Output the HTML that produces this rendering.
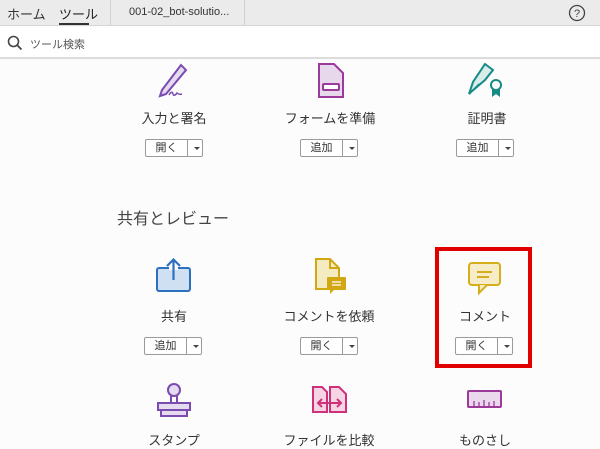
<!DOCTYPE html>
<html><head><meta charset="utf-8"><style>
*{margin:0;padding:0;box-sizing:border-box}
body{width:600px;height:440px;overflow:hidden;background:#fcfcfc;font-family:"Liberation Sans","Noto Sans CJK JP",sans-serif;color:#333;position:relative}
.a{position:absolute}
.top{left:0;top:0;width:600px;height:26px;background:#ebebeb;border-bottom:1px solid #d6d6d6}
.sep{top:0;width:1px;height:26px;background:#d0d0d0}
.search{left:0;top:27px;width:600px;height:32px;background:#fff;border-bottom:2px solid #dcdcdc}
.lbl{width:160px;text-align:center;font-size:13px;color:#333;line-height:16px}
.btn{width:58px;height:18px;border:1px solid #9a9a9a;border-radius:2px;background:#fff;font-size:11px;line-height:16px}
.btn span{position:absolute;left:0;top:0;width:41px;text-align:center}
.btn i{position:absolute;left:41px;top:0;width:1px;height:16px;background:#9a9a9a}
.btn b{position:absolute;left:48px;top:7px;border-left:3px solid transparent;border-right:3px solid transparent;border-top:3px solid #444}
</style></head><body>
<div class="a top"></div>
<div class="a" style="left:7px;top:4px;font-size:13px;color:#333">ホーム</div>
<div class="a" style="left:59px;top:4px;font-size:13px;color:#222">ツール</div>
<div class="a" style="left:59px;top:23px;width:30px;height:2px;background:#333"></div>
<div class="a sep" style="left:110px"></div>
<div class="a sep" style="left:244px"></div>
<div class="a" style="left:129px;top:6px;font-size:11px;color:#333">001-02_bot-solutio...</div>
<svg class="a" style="left:568px;top:4px" width="18" height="18"><circle cx="9" cy="9" r="7.5" fill="none" stroke="#444" stroke-width="1.3"/><text x="9" y="13" font-size="11" text-anchor="middle" fill="#444" font-family="Liberation Sans">?</text></svg>
<div class="a search"></div>
<svg class="a" style="left:7px;top:35px" width="16" height="16"><circle cx="6.5" cy="6.5" r="5" fill="none" stroke="#444" stroke-width="1.6"/><line x1="10" y1="10" x2="14.5" y2="14.5" stroke="#444" stroke-width="1.8"/></svg>
<div class="a" style="left:30px;top:36px;font-size:11px;color:#555">ツール検索</div>

<svg class="a" style="left:156px;top:62px" width="40" height="36"><path d="M6 28 L4 34 L10 32 L30 8 L25 3 Z" fill="#e4dbf0" stroke="#7b4bb0" stroke-width="2"/><path d="M10 32 L4 34 M13 33 q3 -5 4 -1 q1 3 4 -1 q2 2 5 1" fill="none" stroke="#7b4bb0" stroke-width="1.5"/></svg>
<svg class="a" style="left:316px;top:62px" width="30" height="38"><path d="M3 2 H18 L27 11 V35 H3 Z" fill="#e8d8ec" stroke="#9b3a9a" stroke-width="2"/><rect x="7" y="22" width="16" height="6" rx="1" fill="#fff" stroke="#9b3a9a" stroke-width="2"/></svg>
<svg class="a" style="left:467px;top:62px" width="40" height="38"><path d="M18 2 L26 8 L18 18 L4 30 L2 32 L6 20 Z" fill="#d8ecea" stroke="#168a86" stroke-width="2"/><path d="M4 30 L12 22" stroke="#168a86" stroke-width="1.5"/><circle cx="29" cy="23" r="5" fill="none" stroke="#168a86" stroke-width="2"/><path d="M25 27 V35 L29 32 L33 35 V27" fill="#168a86"/></svg>
<div class="a lbl" style="left:94px;top:111px">入力と署名</div>
<div class="a lbl" style="left:250px;top:111px">フォームを準備</div>
<div class="a lbl" style="left:407px;top:111px">証明書</div>
<div class="a btn" style="left:145px;top:139px"><span>開く</span><i></i><b></b></div>
<div class="a btn" style="left:300px;top:139px"><span>追加</span><i></i><b></b></div>
<div class="a btn" style="left:456px;top:139px"><span>追加</span><i></i><b></b></div>

<div class="a" style="left:117px;top:205px;font-size:16px;color:#444">共有とレビュー</div>

<svg class="a" style="left:155px;top:256px" width="38" height="38"><rect x="2" y="12" width="33" height="23" rx="2" fill="#cfe0f3" stroke="#2d6fc0" stroke-width="2"/><rect x="14" y="10" width="9" height="4" fill="#fcfcfc"/><path d="M18.5 24 V4 M12 10 L18.5 3.5 L25 10" fill="none" stroke="#2d6fc0" stroke-width="2.2"/></svg>
<svg class="a" style="left:313px;top:257px" width="36" height="38"><path d="M3 2 H17 L26 11 V32 H3 Z" fill="#f5ebc3" stroke="#d2a812" stroke-width="2"/><path d="M17 2 V11 H26" fill="none" stroke="#d2a812" stroke-width="2"/><rect x="14" y="20" width="19" height="13" rx="1" fill="#d2a812"/><path d="M17 33 L17 37 L21 33" fill="#d2a812"/><path d="M19 25 H28 M19 28 H28" stroke="#fff" stroke-width="1.2"/></svg>
<svg class="a" style="left:467px;top:261px" width="36" height="36"><rect x="2" y="2" width="31" height="22" rx="3" fill="#f6ecc8" stroke="#d6ae1c" stroke-width="2"/><path d="M12 24 L12 32 L20 24" fill="#f6ecc8" stroke="#d6ae1c" stroke-width="2"/><path d="M10 11 H25 M10 16 H22" stroke="#d6ae1c" stroke-width="2"/></svg>
<div class="a lbl" style="left:94px;top:309px">共有</div>
<div class="a lbl" style="left:249px;top:309px">コメントを依頼</div>
<div class="a lbl" style="left:405px;top:309px">コメント</div>
<div class="a btn" style="left:144px;top:337px"><span>追加</span><i></i><b></b></div>
<div class="a btn" style="left:300px;top:337px"><span>開く</span><i></i><b></b></div>
<div class="a btn" style="left:455px;top:337px"><span>開く</span><i></i><b></b></div>
<div class="a" style="left:435px;top:247px;width:97px;height:121px;border:4px solid #e00000"></div>

<svg class="a" style="left:155px;top:381px" width="38" height="38"><circle cx="19" cy="9" r="6" fill="#e4dbf0" stroke="#7b4bb0" stroke-width="2"/><path d="M16 15 V22 M22 15 V22" stroke="#7b4bb0" stroke-width="2"/><rect x="3" y="22" width="32" height="7" fill="#e4dbf0" stroke="#7b4bb0" stroke-width="2"/><rect x="6" y="29" width="26" height="6" fill="#e4dbf0" stroke="#7b4bb0" stroke-width="2"/></svg>
<svg class="a" style="left:311px;top:385px" width="38" height="34"><path d="M2 2 H11 L16 7 V27 H2 Z" fill="#f5d5e4" stroke="#d0307a" stroke-width="2"/><path d="M19 2 H28 L35 9 V27 H19 Z" fill="#f5d5e4" stroke="#d0307a" stroke-width="2"/><path d="M8 18 H29 M11 14 L7 18 L11 22 M26 14 L30 18 L26 22" fill="none" stroke="#d0307a" stroke-width="2"/></svg>
<svg class="a" style="left:466px;top:389px" width="38" height="24"><rect x="2" y="2" width="33" height="16" rx="1" fill="#ead8ec" stroke="#9b3a9a" stroke-width="2"/><path d="M8 17 V12 M13 17 V13 M18 17 V11 M23 17 V13 M28 17 V12" stroke="#9b3a9a" stroke-width="1.3"/></svg>
<div class="a lbl" style="left:94px;top:433px">スタンプ</div>
<div class="a lbl" style="left:249px;top:433px">ファイルを比較</div>
<div class="a lbl" style="left:405px;top:433px">ものさし</div>
</body></html>
